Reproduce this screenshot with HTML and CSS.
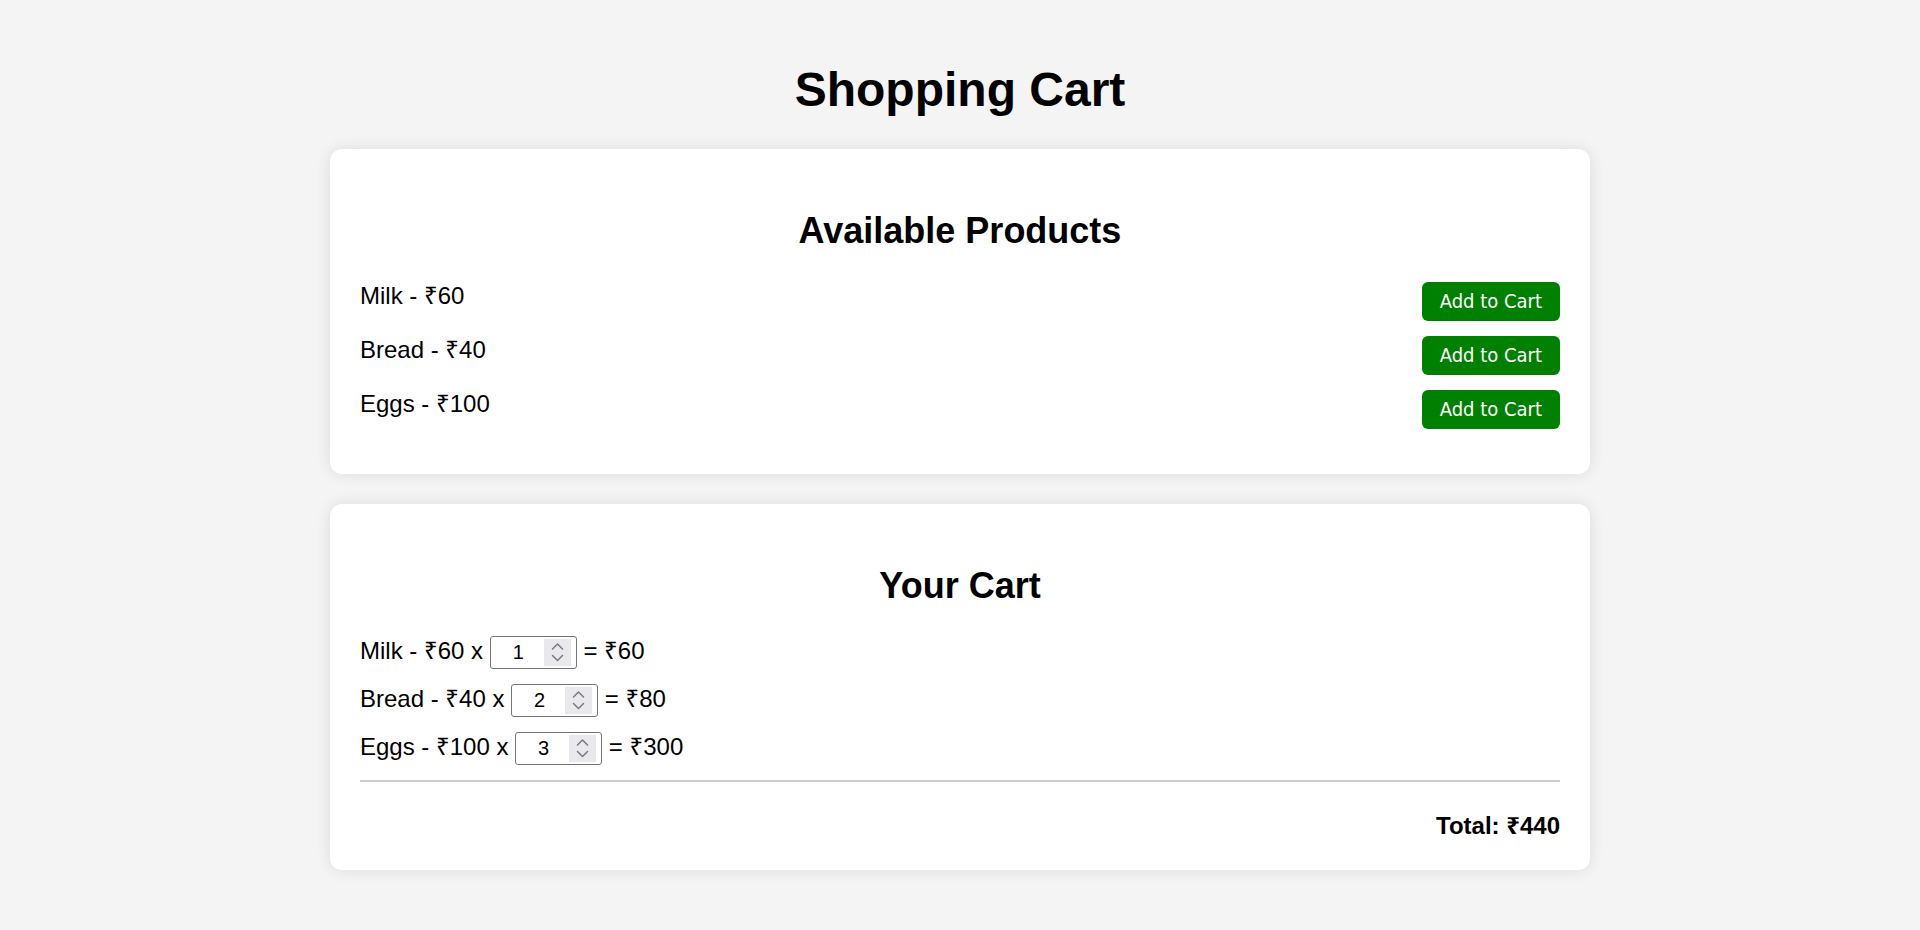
FILE: index.html
```html
<!DOCTYPE html>
<html lang="en">
<head>
<meta charset="utf-8">
<title>Shopping Cart</title>
<link rel="stylesheet" href="styles.css">
</head>
<body>
<h1 class="page-title">Shopping Cart</h1>
<main class="container">
  <section class="card">
    <h2 class="card-title">Available Products</h2>
    <div class="product">
      <span class="product-name">Milk - ₹60</span>
      <button class="add-btn" type="button">Add to Cart</button>
    </div>
    <div class="product">
      <span class="product-name">Bread - ₹40</span>
      <button class="add-btn" type="button">Add to Cart</button>
    </div>
    <div class="product">
      <span class="product-name">Eggs - ₹100</span>
      <button class="add-btn" type="button">Add to Cart</button>
    </div>
  </section>
  <section class="card">
    <h2 class="card-title">Your Cart</h2>
    <div class="cart-item">Milk - ₹60 x <span class="qty"><input class="qty-input" type="text" value="1" aria-label="Milk quantity"><span class="spin"><svg width="27" height="27" viewBox="0 0 27 27"><path d="M8.5 10 L13.5 5 L18.5 10 M8.5 16.5 L13.5 21.5 L18.5 16.5" fill="none" stroke="#7a7a7a" stroke-width="1.5" stroke-linecap="round" stroke-linejoin="round"/></svg></span></span> = ₹60</div>
    <div class="cart-item">Bread - ₹40 x <span class="qty"><input class="qty-input" type="text" value="2" aria-label="Bread quantity"><span class="spin"><svg width="27" height="27" viewBox="0 0 27 27"><path d="M8.5 10 L13.5 5 L18.5 10 M8.5 16.5 L13.5 21.5 L18.5 16.5" fill="none" stroke="#7a7a7a" stroke-width="1.5" stroke-linecap="round" stroke-linejoin="round"/></svg></span></span> = ₹80</div>
    <div class="cart-item">Eggs - ₹100 x <span class="qty"><input class="qty-input" type="text" value="3" aria-label="Eggs quantity"><span class="spin"><svg width="27" height="27" viewBox="0 0 27 27"><path d="M8.5 10 L13.5 5 L18.5 10 M8.5 16.5 L13.5 21.5 L18.5 16.5" fill="none" stroke="#7a7a7a" stroke-width="1.5" stroke-linecap="round" stroke-linejoin="round"/></svg></span></span> = ₹300</div>
    <div class="total">Total: ₹440</div>
  </section>
</main>
</body>
</html>
```
FILE: styles.css
```css
html, body {
  margin: 0;
  background: #f4f4f4;
}
body {
  padding: 30px 30px 0;
  font-family: "Liberation Sans", Arial, "Noto Sans", "DejaVu Sans", sans-serif;
  font-size: 24px;
  line-height: 1.15;
  color: #000;
}
.page-title {
  font-size: 48px;
  font-weight: bold;
  text-align: center;
  margin: 32px 0;
}
.container {
  max-width: 1260px;
  margin: 0 auto;
}
.card {
  background: #fff;
  border-radius: 12px;
  padding: 31px 30px 30px;
  margin-bottom: 30px;
  box-shadow: 0 0 15px rgba(0, 0, 0, 0.1);
}
.card-title {
  font-size: 36px;
  font-weight: bold;
  text-align: center;
  margin: 30px 0;
}
.product {
  display: flex;
  justify-content: space-between;
  margin: 15px 0;
}
.add-btn {
  background: #008000;
  color: #fff;
  border: none;
  border-radius: 6px;
  height: 39px;
  padding: 0 18px;
  font-family: "DejaVu Sans Condensed", "DejaVu Sans", sans-serif;
  font-stretch: condensed;
  font-size: 20px;
  line-height: 1.15;
  cursor: pointer;
}
.cart-item {
  margin: 15px 0;
}
.qty {
  display: inline-flex;
  align-items: center;
  box-sizing: border-box;
  width: 87px;
  height: 33px;
  padding: 0 5px 0 2px;
  border: 1px solid #767676;
  border-radius: 3px;
  background: #fff;
  vertical-align: middle;
}
.qty-input {
  flex: 1;
  min-width: 0;
  border: none;
  outline: none;
  padding: 0;
  margin: 0;
  background: transparent;
  font-family: "Liberation Sans", Arial, sans-serif;
  font-size: 20px;
  color: #000;
  text-align: center;
}
.spin {
  display: flex;
  width: 27px;
  height: 27px;
  background: #e9e9ed;
}
.total {
  margin-top: 15px;
  border-top: 2px solid #cccccc;
  padding-top: 30px;
  text-align: right;
  font-weight: bold;
}
```
